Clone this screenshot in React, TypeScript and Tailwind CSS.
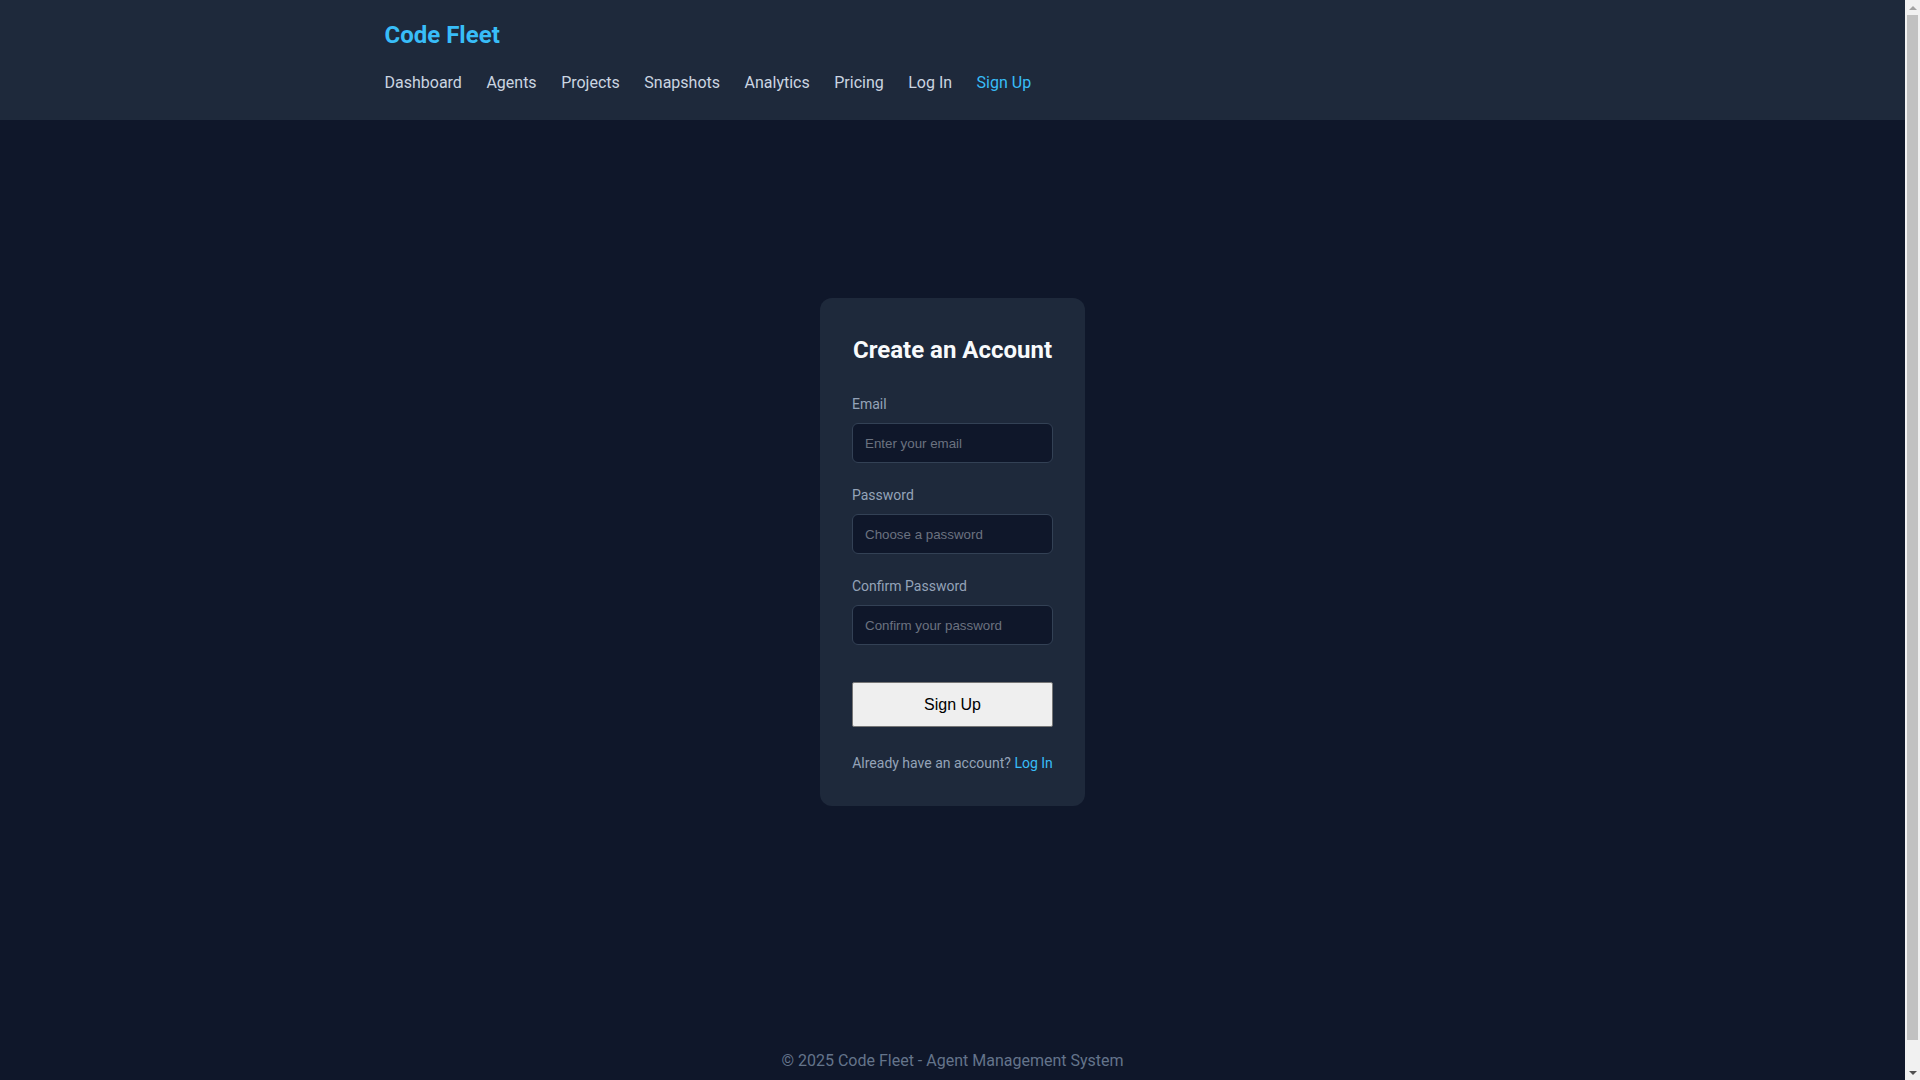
import React from "react";

const roboto = "font-['Roboto','Liberation_Sans',sans-serif]";

function FakeScrollbar() {
  return (
    <div className="sticky top-0 h-screen w-[15px] shrink-0 bg-[#f1f1f1] flex flex-col items-center">
      <div className="h-[15px] w-full flex items-center justify-center">
        <div className="w-0 h-0 border-l-[4px] border-r-[4px] border-b-[4px] border-l-transparent border-r-transparent border-b-[#a3a3a3]" />
      </div>
      <div className="w-[11px] h-[1025px] bg-[#c1c1c1]" />
      <div className="flex-1" />
      <div className="h-[15px] w-full flex items-center justify-center">
        <div className="w-0 h-0 border-l-[4px] border-r-[4px] border-t-[4px] border-l-transparent border-r-transparent border-t-[#505050]" />
      </div>
    </div>
  );
}

export default function App() {
  const nav = ["Dashboard", "Agents", "Projects", "Snapshots", "Analytics", "Pricing", "Log In"];
  const fields = [
    ["Email", "Enter your email", "email"],
    ["Password", "Choose a password", "password"],
    ["Confirm Password", "Confirm your password", "password"],
  ];
  return (
    <div className="flex bg-[#0f172a]">
      <div className={`flex-1 min-w-0 min-h-screen ${roboto} flex flex-col`}>
        <header className="bg-[#1e293b] h-[120px]">
          <div className="max-w-[1200px] mx-auto px-8 pt-[19px]">
            <h1 className="text-2xl leading-8 font-bold text-[#38bdf8]">Code Fleet</h1>
            <nav className="mt-5 flex gap-[24.5px] text-base leading-6 text-[#cbd5e1]">
              {nav.map((n) => (
                <a key={n} href="#" className="hover:text-white">
                  {n}
                </a>
              ))}
              <a href="#" className="text-[#38bdf8]">
                Sign Up
              </a>
            </nav>
          </div>
        </header>

        <main className="min-h-[80vh] flex items-center justify-center">
          <div className="w-[265px] bg-[#1e293b] rounded-xl px-8 pt-8 pb-[33px] flex flex-col">
            <h2 className="text-2xl leading-[40px] font-bold text-[#f8fafc] whitespace-nowrap text-center mb-6">
              Create an Account
            </h2>
            {fields.map(([label, ph, type], i) => (
              <div key={label} className={i < 2 ? "mb-[22px]" : ""}>
                <label className="block text-sm leading-5 text-[#94a3b8] mb-[9px]">{label}</label>
                <input
                  type={type}
                  placeholder={ph}
                  className="block w-full h-10 px-3 bg-[#0f172a] border border-[#334155] rounded-md font-['Liberation_Sans',Arial,sans-serif] text-[13.33px] text-[#e2e8f0] placeholder:text-[#6b7280] outline-none"
                />
              </div>
            ))}
            <button className="mt-[37px] block w-full h-[45px] bg-[#efefef] border border-[#767676] rounded-[2px] font-['Liberation_Sans',Arial,sans-serif] text-base text-black">
              Sign Up
            </button>
            <p className="mt-[26px] text-sm leading-5 text-[#94a3b8] text-center whitespace-nowrap">
              Already have an account?{" "}
              <a href="#" className="text-[#38bdf8]">
                Log In
              </a>
            </p>
          </div>
        </main>

        <footer className="mt-8 pt-[33px] pb-8 text-center text-base leading-6 text-[#64748b]">
          © 2025 Code Fleet - Agent Management System
        </footer>
      </div>
      <FakeScrollbar />
    </div>
  );
}
